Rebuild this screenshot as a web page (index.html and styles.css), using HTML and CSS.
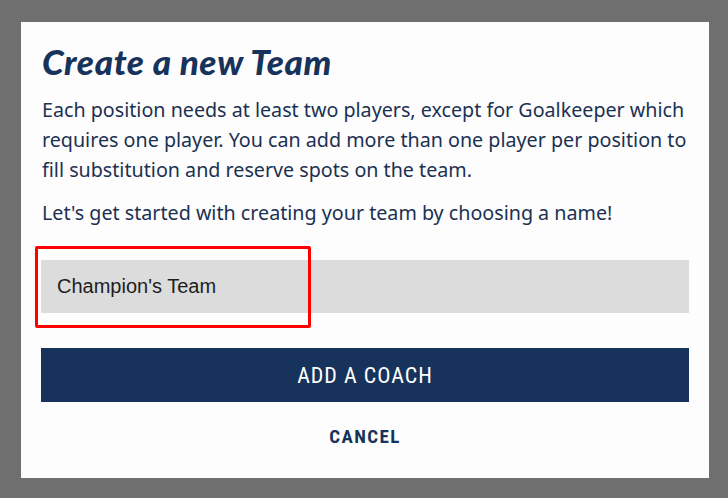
FILE: index.html
```html
<!DOCTYPE html>
<html>
<head>
    <meta charset="UTF-8">
    <title>Create a new Team</title>
    <link rel="stylesheet" href="styles.css">
</head>
<body>

<div class="modal">
    <h1 class="title">Create a new Team</h1>
    <p class="intro">
        Each position needs at least two players, except for Goalkeeper which
        requires one player. You can add more than one player per position to
        fill substitution and reserve spots on the team.
    </p>
    <p class="intro">Let's get started with creating your team by choosing a name!</p>

    <div class="field">
        <input class="name" value="Champion's Team">
        <span class="mark"></span>
    </div>

    <button class="primary">ADD A COACH</button>
    <button class="cancel">CANCEL</button>
</div>

</body>
</html>
```

FILE: styles.css
```css
html, body {
    margin: 0;
    padding: 0;
    height: 100%;
}
body {
    background: #6e6f6e;
    padding-top: 22px;
    box-sizing: border-box;
}
.modal {
    margin-left: 21px;
    width: 688px;
    height: 456px;
    box-sizing: border-box;
    background: #fdfdfd;
    padding: 22px 20px 0 20px;
    display: flex;
    flex-direction: column;
}
.title {
    margin: 0 0 0 1px;
    font-family: Lato, sans-serif;
    font-weight: 900;
    font-style: italic;
    font-size: 35px;
    line-height: 1;
    color: #17335c;
    letter-spacing: 0.6px;
}
.intro {
    margin: 16px 0 0 1px;
    font-family: "Noto Sans", sans-serif;
    font-size: 19.7px;
    line-height: 30px;
    color: #1c3152;
}
.intro + .intro {
    margin-top: 13px;
}
.field {
    position: relative;
    margin-top: 32px;
}
.name {
    display: block;
    width: 100%;
    height: 53px;
    box-sizing: border-box;
    border: 0;
    background: #dcdcdc;
    padding: 0 16px;
    font-family: "Liberation Sans", Arial, sans-serif;
    font-size: 20px;
    color: #1e1e1e;
    outline: none;
}
.mark {
    position: absolute;
    left: -6px;
    top: -14px;
    width: 276px;
    height: 82px;
    box-sizing: border-box;
    border: 3px solid #ff0000;
    border-radius: 2px;
}
.primary {
    margin-top: 35px;
    height: 54px;
    border: 0;
    background: #17335c;
    color: #fff;
    font-family: "Roboto Condensed", Roboto, sans-serif;
    font-size: 22px;
    letter-spacing: 1px;
    cursor: pointer;
}
.cancel {
    margin-top: 22px;
    align-self: center;
    border: 0;
    background: none;
    color: #17335c;
    font-family: "Roboto Condensed", Roboto, sans-serif;
    font-weight: bold;
    font-size: 19px;
    letter-spacing: 1.4px;
    cursor: pointer;
}
```
